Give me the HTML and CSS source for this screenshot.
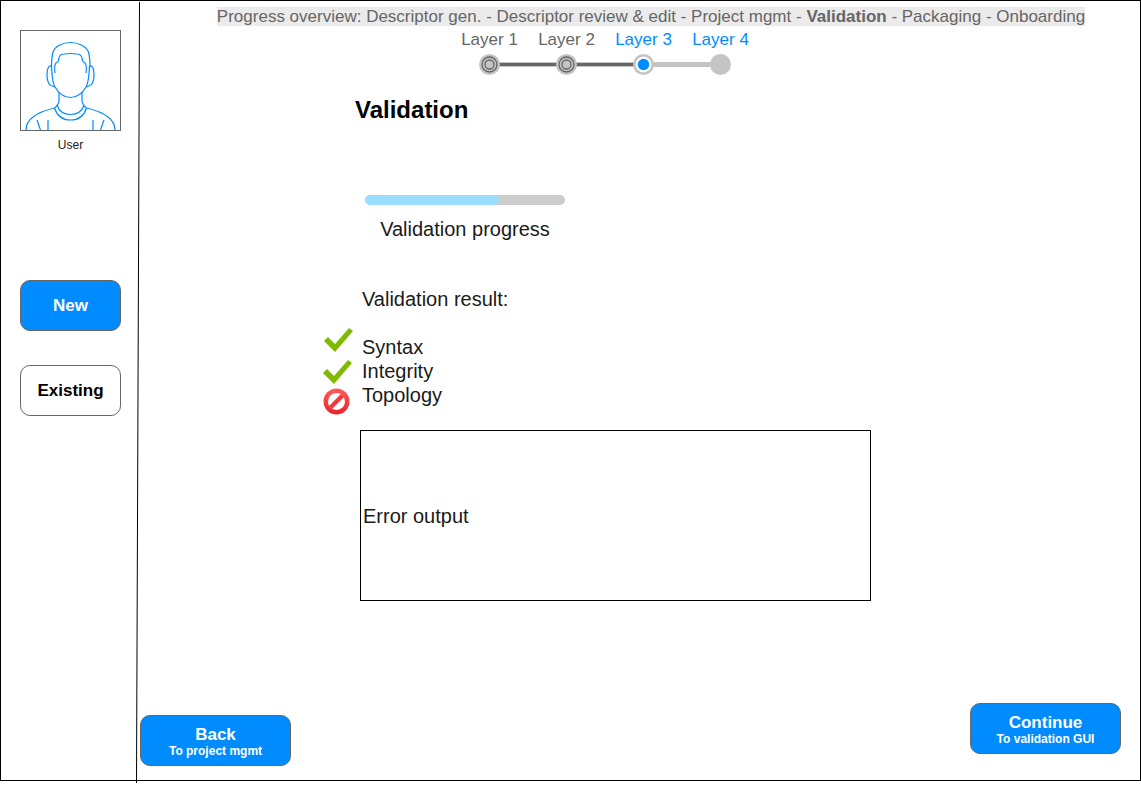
FILE: index.html
```html
<!DOCTYPE html>
<html lang="en">
<head>
<meta charset="utf-8">
<meta name="viewport" content="width=device-width, initial-scale=1">
<title>Validation</title>
<link rel="stylesheet" href="styles.css">
</head>
<body>
<div class="app">
  <aside class="sidebar">
    <figure class="user">
      <svg class="avatar" viewBox="0 0 99 99" fill="none" stroke="#008cff" stroke-width="1.2" aria-hidden="true">
        <path d="M30.500 36C30.500 30 31 25 32 21C34 15 42 11.500 49.500 11.500S65 15 67.500 21C68.500 25 69 30 69 36"/>
        <path d="M34 42C33.500 38 33 34 35 32C37 31 38 29 38 27C38.500 24 41 23 43 23Q49.500 22 56 23C58 23 60.500 24 61 27C61 29 62 31 64 32C66 34 65.500 38 65 42"/>
        <path d="M30.500 35C31 44 31 51 34 56C38 63 43 66.500 49.500 66.500S61 63 65 56C68 51 68 44 68.500 35"/>
        <path d="M30.500 35C27 34 26 39 26 44C26 50 28 54 30 54.500L34 56M68.500 35C72 34 73 39 73 44C73 50 71 54 69 54.500L65 56"/>
        <path d="M38 61V70Q38 73 33.500 77M61 61V70Q61 73 65.500 77"/>
        <path d="M36 74C38 80 43 83.500 49.500 83.500S61 80 63 74M33.500 77C36 85 42 89 49.500 89S63 85 65.500 77"/>
        <path d="M33.500 77C25 79 18 81 12 86C8 89 5 93 5 99M65.500 77C74 79 81 81 87 86C91 89 94 93 94 99"/>
        <path d="M16 89L19.500 99M27 89V99M83 89L79.500 99M72 89V99"/>
      </svg>
      <figcaption>User</figcaption>
    </figure>
    <nav class="side-actions">
      <button class="btn btn-primary" type="button">New</button>
      <button class="btn" type="button">Existing</button>
    </nav>
    <svg class="divider" viewBox="0 0 4 782" preserveAspectRatio="none" aria-hidden="true">
      <line x1="3.500" y1="0" x2="0.500" y2="782" stroke="#000"/>
    </svg>
  </aside>

  <main class="main">
    <header class="header">
      <p class="overview"><span>Progress overview: Descriptor gen. - Descriptor review &amp; edit - Project mgmt - <b>Validation</b> - Packaging - Onboarding</span></p>
      <ol class="steps">
        <li class="step done">Layer 1
          <svg class="dot" viewBox="0 0 21 21" aria-hidden="true"><circle cx="10.500" cy="10.500" r="10.500" fill="#c4c4c4"/><g fill="none" stroke="#666" stroke-width="1.3"><circle cx="10.500" cy="10.500" r="7.500"/><circle cx="10.500" cy="10.500" r="4.500"/></g></svg>
        </li>
        <li class="step done">Layer 2
          <svg class="dot" viewBox="0 0 21 21" aria-hidden="true"><circle cx="10.500" cy="10.500" r="10.500" fill="#c4c4c4"/><g fill="none" stroke="#666" stroke-width="1.3"><circle cx="10.500" cy="10.500" r="7.500"/><circle cx="10.500" cy="10.500" r="4.500"/></g></svg>
        </li>
        <li class="step current">Layer 3
          <svg class="dot" viewBox="0 0 21 21" aria-hidden="true"><circle cx="10.500" cy="10.500" r="9.200" fill="#fff" stroke="#c4c4c4" stroke-width="2.600"/><circle cx="10.500" cy="10.500" r="5.700" fill="#008cff"/></svg>
        </li>
        <li class="step next">Layer 4
          <svg class="dot" viewBox="0 0 21 21" aria-hidden="true"><circle cx="10.500" cy="10.500" r="10.500" fill="#c4c4c4"/></svg>
        </li>
      </ol>
    </header>

    <section class="content">
      <h1>Validation</h1>
      <div class="progress">
        <div class="track" role="progressbar" aria-labelledby="progress-label" aria-valuenow="67" aria-valuemin="0" aria-valuemax="100"><div class="fill" style="width:67%"></div></div>
        <span id="progress-label">Validation progress</span>
      </div>
      <h2>Validation result:</h2>
      <div class="results">
        <div class="marks">
          <svg viewBox="0 0 30 26" role="img" aria-label="Passed"><path d="M1 14L5 10L12 17L26 1L30 4L12 25Z" fill="#7fba00"/></svg>
          <svg viewBox="0 0 30 26" role="img" aria-label="Passed"><path d="M0 15L4 11L11 18L25 2L29 5L11 26Z" fill="#7fba00"/></svg>
          <svg viewBox="0 0 30 26" role="img" aria-label="Failed">
            <defs><linearGradient id="red" x1="0" y1="0" x2="0" y2="1"><stop offset="0" stop-color="#ff5c57"/><stop offset="1" stop-color="#e9232c"/></linearGradient></defs>
            <circle cx="13.500" cy="12.500" r="13" fill="url(#red)"/>
            <circle cx="13.500" cy="12.500" r="8.500" fill="#fff"/>
            <path d="M7.500 18.500L19.500 6.500" stroke="#f3393f" stroke-width="4.500"/>
          </svg>
        </div>
        <ul class="checks">
          <li>Syntax</li>
          <li>Integrity</li>
          <li>Topology</li>
        </ul>
      </div>
      <div class="output">Error output</div>
    </section>

    <footer class="footer">
      <button class="btn btn-primary btn-wide" type="button">Back<small>To project mgmt</small></button>
      <button class="btn btn-primary btn-wide btn-continue" type="button">Continue<small>To validation GUI</small></button>
    </footer>
  </main>
</div>
</body>
</html>
```
FILE: styles.css
```css
*,
*::after {
  box-sizing: border-box;
}

body {
  margin: 0;
  padding-bottom: 4px;
  min-height: 100vh;
  display: flex;
  background: #fff;
  color: #1a1a1a;
  font-family: "Liberation Sans", Arial, sans-serif;
  font-size: 20px;
  line-height: 24px;
}

.app {
  flex: 1;
  display: grid;
  grid-template-columns: 139px 1fr;
  border: 1px solid #000;
}

/* Sidebar */
.sidebar {
  position: relative;
  padding: 29px 19px;
}

.user {
  margin: 0;
  width: 101px;
  text-align: center;
  font-size: 12px;
  line-height: 14px;
}

.avatar {
  display: block;
  width: 101px;
  height: 101px;
  margin-bottom: 7px;
  border: 1px solid #666;
}

.side-actions {
  display: flex;
  flex-direction: column;
  gap: 34px;
  margin-top: 128px;
}

/* Runs a few pixels past the frame's bottom edge */
.divider {
  position: absolute;
  top: 1px;
  right: 0;
  width: 4px;
  height: calc(100% + 2px);
}

.btn {
  width: 101px;
  height: 51px;
  padding: 0;
  border: 1px solid #666;
  border-radius: 10px;
  background: #fff;
  color: #000;
  font-family: inherit;
  font-size: 17px;
  font-weight: bold;
  line-height: 19px;
}

.btn-primary {
  background: #008cff;
  color: #fff;
}

.btn-wide {
  width: 151px;
  padding-top: 2px;
}

.btn small {
  display: block;
  font-size: 12px;
  line-height: 14px;
}

/* Main column */
.main {
  display: flex;
  flex-direction: column;
  min-width: 0;
}

.overview {
  margin: 0;
  padding: 6px 0 0 22px;
  text-align: center;
  color: #666;
  font-size: 17px;
  line-height: 19px;
}

.overview span {
  background: #ebebeb;
}

.steps {
  display: flex;
  list-style: none;
  width: 308px;
  margin: 4px 0 0 311px;
  padding: 0;
  font-size: 17px;
  line-height: 19px;
}

.step {
  position: relative;
  flex: 1;
  display: flex;
  flex-direction: column;
  align-items: center;
  gap: 5px;
  color: #666;
}

.current,
.next {
  color: #008cff;
}

/* Connector to the following step */
.step:not(:last-child)::after {
  content: "";
  position: absolute;
  left: 50%;
  bottom: 8px;
  width: 100%;
  height: 5px;
  background: #c4c4c4;
}

.done:not(:last-child)::after {
  border: solid #c4c4c4;
  border-width: 1px 0;
  background: #666;
}

.dot {
  position: relative;
  z-index: 1;
  width: 21px;
  height: 21px;
}

.content {
  padding: 20px 20px 20px 183px;
}

h1 {
  margin: 0 0 0 32px;
  font-size: 24px;
  line-height: 30px;
  color: #000;
}

.progress {
  display: flex;
  flex-direction: column;
  align-items: center;
  gap: 12px;
  width: 200px;
  margin: 70px 0 0 42px;
}

.track {
  width: 100%;
  height: 10px;
  border-radius: 5px;
  background: #ccc;
  overflow: hidden;
}

.fill {
  height: 100%;
  border-radius: 5px;
  background: #99ddff;
}

h2 {
  margin: 46px 0 0 39px;
  font-size: 20px;
  font-weight: normal;
}

.results {
  display: flex;
  align-items: center;
  gap: 9px;
  margin-top: 16px;
}

.marks {
  display: flex;
  flex-direction: column;
  gap: 5px;
}

.marks svg {
  display: block;
  width: 30px;
  height: 26px;
  overflow: visible;
}

.checks {
  margin: 0;
  padding: 0;
  list-style: none;
}

.output {
  display: flex;
  align-items: center;
  max-width: 511px;
  height: 171px;
  margin: 15px 0 0 37px;
  padding-left: 2px;
  border: 1px solid #000;
}

.footer {
  display: flex;
  justify-content: space-between;
  align-items: flex-end;
  margin-top: auto;
  padding: 0 19px 14px 0;
}

.btn-continue {
  margin-bottom: 12px;
}
```
